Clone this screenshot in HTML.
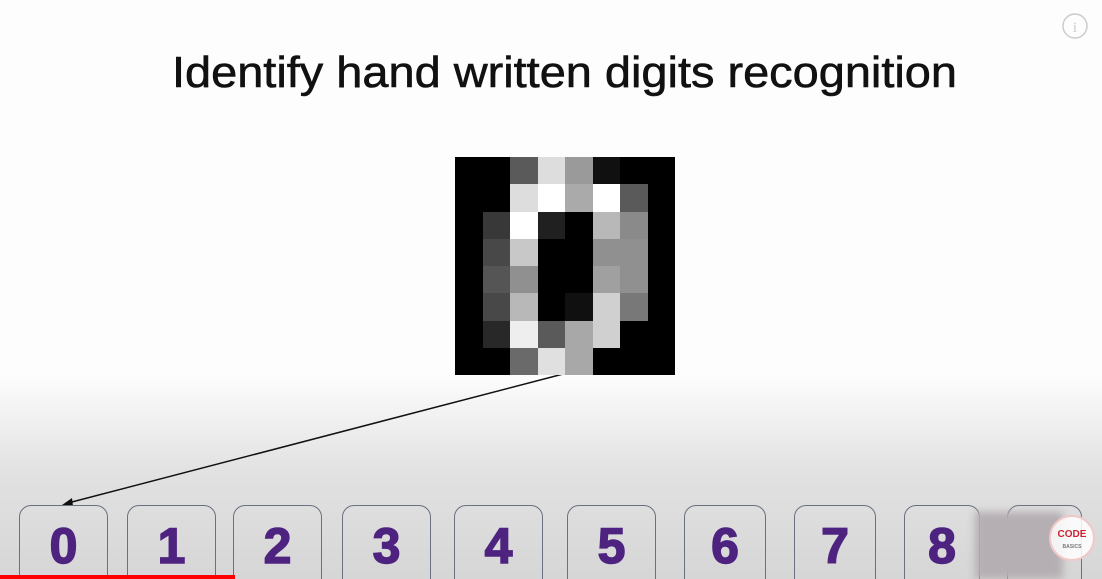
<!DOCTYPE html>
<html><head><meta charset="utf-8"><style>
html,body{margin:0;padding:0;width:1102px;height:579px;overflow:hidden}
body{position:relative;background:linear-gradient(#fdfdfd 0px,#fdfdfd 375px,#e2e2e2 470px,#d6d6d6 579px);font-family:"Liberation Sans",sans-serif}
.box{position:absolute;top:505px;height:90px;border:1.5px solid #6a7080;border-radius:12px;box-sizing:border-box;text-align:center;color:#4e2380;font-weight:bold;font-size:50px;line-height:80px;-webkit-text-stroke:1.5px #4e2380}
#grid{position:absolute;left:455px;top:157px;width:220px;height:218px;display:grid;grid-template-columns:repeat(8,1fr);grid-template-rows:repeat(8,1fr)}
</style></head><body>
<svg width="1102" height="579" style="position:absolute;left:0;top:0">
<text x="172" y="87" font-family="Liberation Sans, sans-serif" font-size="44" fill="#111" stroke="#111" stroke-width="0.6" textLength="785" lengthAdjust="spacingAndGlyphs">Identify hand written digits recognition</text>
<circle cx="1075" cy="26" r="12" fill="none" stroke="#ccc" stroke-width="1.5"/>
<text x="1075" y="32" font-size="15" fill="#ccc" text-anchor="middle" font-family="Liberation Serif, serif">i</text>
<line x1="567" y1="373" x2="68" y2="503" stroke="#111" stroke-width="1.5"/>
<polygon points="62,505 72,498 73,506" fill="#111"/>
</svg>
<div id="grid"></div>
<div class="box" style="left:19px;width:89px">0</div>
<div class="box" style="left:127px;width:89px">1</div>
<div class="box" style="left:233px;width:89px">2</div>
<div class="box" style="left:342px;width:89px">3</div>
<div class="box" style="left:454px;width:89px">4</div>
<div class="box" style="left:567px;width:89px">5</div>
<div class="box" style="left:684px;width:82px">6</div>
<div class="box" style="left:794px;width:82px">7</div>
<div class="box" style="left:904px;width:76px">8</div>
<div class="box" style="left:1007px;width:75px"></div>
<div style="position:absolute;left:975px;top:512px;width:88px;height:67px;background:#b5aeb3;filter:blur(4px)"></div>
<div style="position:absolute;left:1049px;top:515px;width:46px;height:46px;border-radius:50%;background:rgba(255,255,255,.85);border:2px solid #f0c8c8;box-sizing:border-box;text-align:center;font-size:10px;color:#c23;font-weight:bold;line-height:11px;padding-top:12px">CODE<br><span style="font-size:5px;color:#777">BASICS</span></div>
<div style="position:absolute;left:0;top:575px;width:235px;height:4px;background:#f00"></div>
<script>
var v=[[0,0,90,221,154,16,0,0],[0,0,221,255,170,255,90,0],[0,56,255,32,0,184,138,0],[0,72,200,0,0,144,144,0],[0,85,144,0,0,160,144,0],[0,72,184,0,16,208,120,0],[0,40,238,90,168,208,0,0],[0,0,106,224,168,0,0,0]];
var g=document.getElementById('grid');
v.forEach(r=>r.forEach(c=>{var d=document.createElement('div');d.style.background='rgb('+c+','+c+','+c+')';g.appendChild(d);}));
</script>
</body></html>
